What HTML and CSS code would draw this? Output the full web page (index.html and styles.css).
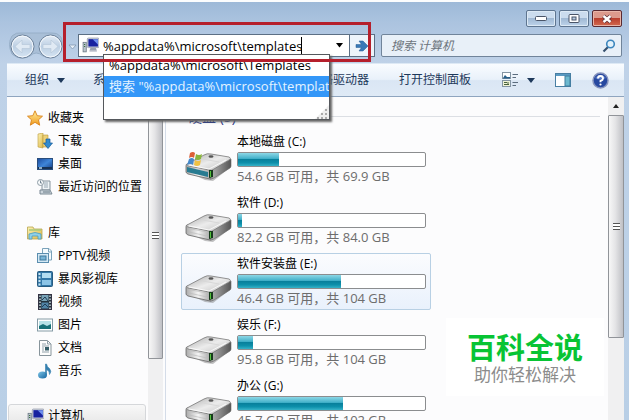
FILE: index.html
```html
<!DOCTYPE html>
<html lang="zh-CN">
<head>
<meta charset="utf-8">
<title>计算机</title>
<link rel="stylesheet" href="styles.css">
</head>
<body>
<svg class="defs" aria-hidden="true">
  <defs>
    <linearGradient id="metalTop" x1="0" y1="0" x2="1" y2="1"><stop offset="0" stop-color="#a9a9a9"/><stop offset=".5" stop-color="#ececec"/><stop offset="1" stop-color="#bdbdbd"/></linearGradient>
    <linearGradient id="metalSide" x1="0" y1="0" x2="1" y2="0"><stop offset="0" stop-color="#b8b8b8"/><stop offset="1" stop-color="#555"/></linearGradient>
    <linearGradient id="metalFront" x1="0" y1="0" x2="1" y2="0"><stop offset="0" stop-color="#aaa"/><stop offset=".45" stop-color="#f4f4f4"/><stop offset="1" stop-color="#999"/></linearGradient>
    <linearGradient id="blueGlass" x1="0" y1="0" x2="1" y2="1"><stop offset="0" stop-color="#1b4a9c"/><stop offset=".5" stop-color="#3f86d8"/><stop offset="1" stop-color="#123a80"/></linearGradient>
    <linearGradient id="folder" x1="0" y1="0" x2="1" y2="1"><stop offset="0" stop-color="#fdf3b5"/><stop offset="1" stop-color="#dcb646"/></linearGradient>
    <linearGradient id="star" x1="0" y1="0" x2="0" y2="1"><stop offset="0" stop-color="#fff0a0"/><stop offset="1" stop-color="#f09a1c"/></linearGradient>
    <linearGradient id="note" x1="0" y1="0" x2="1" y2="1"><stop offset="0" stop-color="#7cc4e6"/><stop offset="1" stop-color="#1464a0"/></linearGradient>
    <linearGradient id="orb" x1="0" y1="0" x2="0" y2="1"><stop offset="0" stop-color="#e6eef7"/><stop offset=".5" stop-color="#bccfe3"/><stop offset="1" stop-color="#d6e5f3"/></linearGradient>
    <symbol id="drive" viewBox="0 0 48 30">
      <path d="M3 20L20 28L28 29L46 15V12L27 22Z" fill="#777" opacity=".45"/>
      <path d="M2 12Q1 12 1 14V20Q1 21 3 22L25 27Q28 27 28 25V18Z" fill="url(#metalFront)" stroke="#666" stroke-width=".8"/>
      <path d="M28 17L46 7V14Q46 15 45 16L29 26Q27 27 25 27Z" fill="url(#metalSide)" stroke="#666" stroke-width=".6"/>
      <path d="M2 12L19 3Q22 1 26 2L44 5Q47 6 44 8L29 17Q27 19 24 18L3 14Q0 13 2 12Z" fill="url(#metalTop)" stroke="#777" stroke-width=".8"/>
      <path d="M4 13L24 17L41 8" fill="none" stroke="#fff" stroke-width=".8"/>
      <path d="M18 7L34 10" stroke="#d8d8d8" stroke-width="1"/>
      <ellipse cx="26" cy="4.500" rx="2.500" ry="1.200" fill="#555"/>
      <path d="M4 15.500V19L22 23V19Z" fill="none" stroke="#bbb" stroke-width=".7"/>
      <path d="M24 18H28V25L24 26Z" fill="#173c1c"/><path d="M25.500 19V25" stroke="#54c43c" stroke-width="1"/>
    </symbol>
    <symbol id="computer" viewBox="0 0 16 16">
      <rect x="5" y="1" width="11" height="9" rx="1" fill="#d8dce5" stroke="#8b92a5" stroke-width=".7"/>
      <rect x="6" y="2" width="9" height="7" fill="#1822a0"/><path d="M10 2H15V7Z" fill="#6f91ee"/>
      <path d="M8 10H13L14 13H7Z" fill="#9aa1b0"/><path d="M7 13H14V14H7Z" fill="#c8ccd6"/>
      <rect x="1" y="5" width="3" height="9" fill="#bac4cc" stroke="#667480" stroke-width=".7"/><path d="M2 7H3M2 9H3" stroke="#2a6630"/>
    </symbol>
  </defs>
</svg>
<div class="window">
  <header class="titlebar">
    <button class="caption" aria-label="最小化"><svg width="12" height="5" viewBox="0 0 12 5"><rect x=".5" y=".5" width="11" height="4" rx="1" fill="#fff" stroke="#4a5568"/></svg></button>
    <button class="caption" aria-label="最大化"><svg width="12" height="9" viewBox="0 0 12 9"><rect x="1" y=".5" width="10" height="8" rx="1" fill="#fff" stroke="#4a5568"/><rect x="4" y="3" width="4" height="3" fill="#b5cae0" stroke="#4a5568"/></svg></button>
    <button class="caption close" aria-label="关闭"><svg width="12" height="10" viewBox="0 0 12 10"><path d="M2.500 2L9.500 8M9.500 2L2.500 8" stroke="#5c3038" stroke-width="4"/><path d="M2.500 2L9.500 8M9.500 2L2.500 8" stroke="#fff" stroke-width="2.400"/></svg></button>
  </header>

  <nav class="navrow">
    <div class="travel">
      <svg class="travel-plate" width="56" height="28" viewBox="0 0 56 28" aria-hidden="true"><path d="M4 4Q8 0 14 1H43Q49 0 53 5Q56 13 51 21Q43 28 35 24Q28 18 22 24Q12 29 4 22Q-1 12 4 4Z" fill="#a9bfd7" stroke="#97afc8"/></svg>
      <button aria-label="后退"><svg width="25" height="25" viewBox="0 0 25 25"><circle cx="12.500" cy="12.500" r="11.500" fill="url(#orb)" stroke="#6b8099"/><circle cx="12.500" cy="12.500" r="10.400" fill="none" stroke="#f4f8fc"/><path d="M5 12.500L12 6V10.500H20V14.500H12V19Z" fill="#e0eaf4" stroke="#b8c9da" stroke-width=".7"/></svg></button>
      <button aria-label="前进"><svg width="25" height="25" viewBox="0 0 25 25"><circle cx="12.500" cy="12.500" r="11.500" fill="url(#orb)" stroke="#6b8099"/><circle cx="12.500" cy="12.500" r="10.400" fill="none" stroke="#f4f8fc"/><path d="M20 12.500L13 6V10.500H5V14.500H13V19Z" fill="#e0eaf4" stroke="#b8c9da" stroke-width=".7"/></svg></button>
      <button aria-label="最近的页面"><svg width="9" height="6" viewBox="0 0 9 6"><path d="M1 1H8L4.500 5Z" fill="#e8f0f8" stroke="#8298b0" stroke-width=".8"/></svg></button>
    </div>
    <div class="address">
      <svg width="17" height="17"><use href="#computer"/></svg>
      <input class="path" aria-label="地址" value="%appdata%\microsoft\templates">
      <span class="caret"></span>
      <button class="history" aria-label="以前的位置"><svg width="7" height="5" viewBox="0 0 7 5"><path d="M0 0H7L3.500 4.500Z" fill="#000"/></svg></button>
      <button class="go" aria-label="转到"><svg width="14" height="14" viewBox="0 0 14 14"><path d="M1 5.500H6.500L4 2H8L13 7L8 12H4L6.500 8.500H1Z" fill="#3979b7" stroke="#255b91" stroke-width=".5"/></svg></button>
      <div class="suggest" role="listbox">
        <div class="option" role="option">%appdata%\microsoft\Templates</div>
        <div class="option selected" role="option">搜索 "%appdata%\microsoft\templates"</div>
        <svg class="grip" width="14" height="14" viewBox="0 0 14 14"><path d="M0 14L14 0V14Z" fill="#eee"/><path d="M11 4v2M11 8v2M11 12v2M7 8v2M7 12v2M3 12v2" stroke="#aaa" stroke-width="2"/></svg>
      </div>
      <div class="marker"></div>
    </div>
    <div class="search">
      <input aria-label="搜索" placeholder="搜索 计算机">
      <svg width="14" height="14" viewBox="0 0 14 14"><path d="M6 8L1.500 12.500" stroke="#35506e" stroke-width="2.200"/><circle cx="8.500" cy="5" r="3.800" fill="#e3f2fb" stroke="#3c86bd" stroke-width="1.600"/></svg>
    </div>
  </nav>

  <div class="toolbar">
    <button class="organize">组织 <svg width="8" height="5" viewBox="0 0 8 5"><path d="M0 0H8L4 5Z" fill="#1e395b"/></svg></button>
    <button class="props">系统属性</button>
    <button class="map">映射网络驱动器</button>
    <button class="panel">打开控制面板</button>
    <div class="tools">
      <button class="views" aria-label="更改视图"><svg width="17" height="16" viewBox="0 0 17 16"><rect x=".5" y=".5" width="8" height="6" fill="#fff" stroke="#8495a3"/><path d="M1 6L3 3L5 5H8V6.500H1Z" fill="#285f89"/><rect x=".5" y="8.500" width="8" height="6" fill="#eef3d6" stroke="#8495a3"/><path d="M2 10.500H5M2 12.500H7M6 10V13" stroke="#49623c"/><path d="M10.500 2.500H16M10.500 5.500H14M10.500 10.500H16M10.500 13.500H14" stroke="#5b6c7e"/></svg><svg width="8" height="5" viewBox="0 0 8 5"><path d="M0 0H8L4 5Z" fill="#1e395b"/></svg></button>
      <button aria-label="预览窗格"><svg width="17" height="15" viewBox="0 0 17 15"><rect x=".5" y=".5" width="15" height="13" fill="#fff" stroke="#487fa3"/><path d="M1 2H15" stroke="#5a9ac2" stroke-width="2"/><rect x="10" y="3" width="5" height="10" fill="#6db9cf" stroke="#417e9f"/></svg></button>
      <button aria-label="帮助"><svg width="17" height="17" viewBox="0 0 17 17"><circle cx="8.500" cy="8.500" r="7.500" fill="#2648a0" stroke="#8593bd" stroke-width="1.500"/><path d="M3 6Q8 0 14 6Q8 9 3 6Z" fill="#6f91d8" opacity=".7"/><path d="M6 6.500Q6 4 8.500 4T11 6.500Q11 8 8.500 9V10.300" fill="none" stroke="#fff" stroke-width="1.900"/><circle cx="8.500" cy="12.500" r="1.100" fill="#fff"/></svg></button>
    </div>
  </div>

  <div class="content">
    <aside class="sidebar">
      <ul>
        <li><svg width="16" height="16" viewBox="0 0 16 16"><path d="M8 .8L10.200 5.700L15.500 6.200L11.500 9.800L12.700 15.200L8 12.300L3.300 15.200L4.500 9.800L.5 6.200L5.800 5.700Z" fill="url(#star)" stroke="#d98218" stroke-width=".9"/></svg>收藏夹</li>
        <li class="child"><svg width="16" height="16" viewBox="0 0 16 16"><path d="M1 1L6 0V15L1 14Z" fill="url(#folder)" stroke="#bb983b" stroke-width=".6"/><path d="M6 2H11V14H6Z" fill="#ecd077" stroke="#bb983b" stroke-width=".6"/><path d="M9 6H13V10H15.500L11 15.500L6.500 10H9Z" fill="#328bcf" stroke="#155a98" stroke-width=".7"/></svg>下载</li>
        <li class="child"><svg width="16" height="16" viewBox="0 0 16 16"><rect x=".5" y="2.500" width="15" height="11" fill="url(#blueGlass)" stroke="#294d7c"/><path d="M1 12H15" stroke="#173253" stroke-width="2"/><path d="M2 12H5" stroke="#b6d6e8" stroke-width="1.500"/></svg>桌面</li>
        <li class="child"><svg width="16" height="16" viewBox="0 0 16 16"><path d="M5 2H13V11H5Z" fill="#eef3f6" stroke="#85939d"/><path d="M7 4H11M7 6H11M7 8H11" stroke="#98a8b4"/><path d="M3 11H13L15 15H3Z" fill="#ccd5dc" stroke="#7a8994"/><path d="M6 13H13" stroke="#697a86"/><circle cx="3.500" cy="3.500" r="3" fill="#f5f8fa" stroke="#8f9da6"/><path d="M3.500 1.500V4H5" fill="none" stroke="#56697a" stroke-width=".8"/></svg>最近访问的位置</li>
        <li class="group"><svg width="16" height="16" viewBox="0 0 16 16"><path d="M.5 2H6L7 4H15V14H.5Z" fill="url(#folder)" stroke="#b9a44e" stroke-width=".8"/><path d="M2 5H14" stroke="#a9c878" stroke-width="1.500"/><path d="M2 14V9Q8 6 14 9V14H11V11H5V14Z" fill="#8fd0e8" stroke="#4d9cbc" stroke-width=".8"/></svg>库</li>
        <li class="child"><svg width="16" height="16" viewBox="0 0 16 16"><path d="M5.500 .5H12L14.500 3V12H5.500Z" fill="#f5fbfe" stroke="#7ba2ba"/><path d="M11.500 1V4H14" fill="none" stroke="#7ba2ba"/><rect x=".5" y="5.500" width="11" height="9" fill="#d4e9f5" stroke="#5b8eaf"/><rect x="3" y="8" width="6" height="4" fill="#78b4d5" stroke="#3c789d"/></svg>PPTV视频</li>
        <li class="child"><svg width="16" height="16" viewBox="0 0 16 16"><rect x=".5" y=".5" width="15" height="15" rx="1" fill="#3478a8" stroke="#275b80"/><path d="M2.500 2V15" stroke="#c9e5f3" stroke-width="2" stroke-dasharray="2 1.500"/><rect x="5" y="2" width="9" height="5" fill="#b4ddf1"/><rect x="5" y="9" width="9" height="5" fill="#8cc4e6"/></svg>暴风影视库</li>
        <li class="child"><svg width="16" height="16" viewBox="0 0 16 16"><rect x="1.500" y=".5" width="13" height="15" fill="#24323c" stroke="#334"/><path d="M3 1.500V15M13 1.500V15" stroke="#d8e2e8" stroke-width="1.400" stroke-dasharray="1.500 1.500"/><rect x="4.500" y="1" width="7" height="6" fill="#78a3b7"/><rect x="4.500" y="8.500" width="7" height="6" fill="#5084a7"/><path d="M5 6L8 3L11 7M5 13L8 10L11 13" stroke="#213c55" fill="none"/></svg>视频</li>
        <li class="child"><svg width="16" height="16" viewBox="0 0 16 16"><rect x=".5" y="2" width="15" height="12" fill="#fff" stroke="#859ba6"/><rect x="2" y="4" width="12" height="8" fill="#b9e3e8"/><path d="M2 9L6 7L10 9L14 7V12H2Z" fill="#197279"/></svg>图片</li>
        <li class="child"><svg width="16" height="16" viewBox="0 0 16 16"><path d="M2.500 .5H10.500L14 4V15.500H2.500Z" fill="#fdfdfd" stroke="#87949b"/><path d="M10.500 1V4H14M5 4H9M5 6H12M5 8H7M5 10H7M5 12H12" fill="none" stroke="#91a1aa"/><rect x="8" y="7" width="4" height="3.500" fill="#365f69"/></svg>文档</li>
        <li class="child"><svg width="16" height="16" viewBox="0 0 16 16"><ellipse cx="5.500" cy="12" rx="4.500" ry="3.500" fill="url(#note)"/><path d="M8.500 12V1H9.500Q10 4 12.500 5.500Q15 8.500 12.500 11.500Q13 8 9.500 6.500V12Z" fill="#347fae" stroke="#347fae" stroke-width=".6"/></svg>音乐</li>
        <li class="current"><svg width="17" height="17"><use href="#computer"/></svg>计算机</li>
      </ul>
    </aside>
    <div class="scroll side-scroll"><div class="thumb"><i></i></div></div>
    <main class="main">
      <h2>硬盘 (5)</h2>
      <div class="drives">
        <section class="drive"><svg width="48" height="30"><use href="#drive"/><path d="M2 15V20L23 25V20Z" fill="#287b91"/><path d="M5 1Q8-1 10 1L9 6Q7 4 4 6Z" fill="#dd6037"/><path d="M11 2Q14 4 17 2L16 7Q13 9 10 7Z" fill="#8ab63c"/><path d="M4 7Q7 5 9 7L8 13Q6 11 2 13Z" fill="#4689ca"/><path d="M10 8Q13 10 16 8L15 13Q12 15 9 13Z" fill="#efc144"/></svg><div class="info"><h3>本地磁盘 (C:)</h3><div class="bar"><div class="fill" style="width:22%"></div></div><p>54.6 GB 可用，共 69.9 GB</p></div></section>
        <section class="drive"><svg width="48" height="30"><use href="#drive"/></svg><div class="info"><h3>软件 (D:)</h3><div class="bar"><div class="fill" style="width:2%"></div></div><p>82.2 GB 可用，共 84.0 GB</p></div></section>
        <section class="drive hover"><svg width="48" height="30"><use href="#drive"/></svg><div class="info"><h3>软件安装盘 (E:)</h3><div class="bar"><div class="fill" style="width:55%"></div></div><p>46.4 GB 可用，共 104 GB</p></div></section>
        <section class="drive"><svg width="48" height="30"><use href="#drive"/></svg><div class="info"><h3>娱乐 (F:)</h3><div class="bar"><div class="fill" style="width:8%"></div></div><p>95.8 GB 可用，共 104 GB</p></div></section>
        <section class="drive"><svg width="48" height="30"><use href="#drive"/></svg><div class="info"><h3>办公 (G:)</h3><div class="bar"><div class="fill" style="width:56%"></div></div><p>45.7 GB 可用，共 102 GB</p></div></section>
      </div>
    </main>
    <div class="scroll main-scroll"><svg class="up" width="6" height="4" viewBox="0 0 6 4"><path d="M0 4L3 0L6 4Z" fill="#222"/></svg><div class="thumb"><i></i></div></div>
  </div>
</div>
<div class="brand"><strong>百科全说</strong><span>助你轻松解决</span></div>
</body>
</html>
```
FILE: styles.css
```css
* { box-sizing: border-box; }
body {
  margin: 0;
  height: 100vh;
  overflow: hidden;
  position: relative;
  font: 12px/16px "Open Sans", "Noto Sans CJK SC", sans-serif;
  color: #000;
}
button, input { font: inherit; color: inherit; margin: 0; padding: 0; border: 0; background: none; outline: 0; }
button { display: flex; align-items: center; justify-content: center; white-space: nowrap; }
svg { display: block; flex: none; }
.defs { position: absolute; width: 0; height: 0; }
h2, h3, p, ul { margin: 0; padding: 0; font-weight: normal; }
h3 { font-size: 12px; }

.window {
  height: 100%;
  display: flex;
  flex-direction: column;
  border-top: 2px solid #fbfdfe;
  padding: 0 5px 0 7px;
  background: linear-gradient(#9db9d8, #abc3df 20px, #bfd2e8 62px, #b9cfe6);
}
.titlebar { flex: none; height: 32px; padding: 8px 2px 0; display: flex; justify-content: flex-end; align-items: flex-start; gap: 3px; }
.caption { width: 30px; height: 17px; border: 1px solid #5e7590; border-radius: 2px; background: linear-gradient(#cbdcee 45%, #a0b9d4 50%, #bdd3ea); box-shadow: inset 0 0 0 1px #dce9f5; }
.close { border-color: #5a2a31; background: linear-gradient(#dc9a8c 45%, #b93f2d 50%, #d2694f); box-shadow: inset 0 0 0 1px #e8b5a8; }

.navrow { flex: none; height: 30px; display: flex; align-items: flex-start; padding-right: 2px; }
.travel { position: relative; width: 71px; height: 25px; display: flex; align-items: center; gap: 3px; padding-left: 3px; }
.travel button { position: relative; }
.travel button:last-child { margin-left: 2px; }
.travel-plate { position: absolute; left: 1px; top: -2px; }
.address { position: relative; flex: 0 0 297px; height: 23px; display: flex; align-items: center; border: 1px solid #5c6f84; background: #fff; padding-left: 3px; }
.path { width: 198px; height: 19px; margin-left: 4px; font-size: 13px; }
.caret { width: 1px; height: 17px; background: #000; }
.history { margin-left: auto; width: 20px; height: 21px; }
.go { width: 25px; height: 21px; border-left: 1px solid #5c6f84; background: #edf4fb; }
.suggest { position: absolute; z-index: 2; left: 24px; top: 19px; width: 227px; height: 66px; background: #fff; border: 1px solid #55585c; box-shadow: 2px 2px 2px #666; }
.option { height: 21px; line-height: 21px; padding-left: 5px; font-size: 13px; white-space: nowrap; overflow: hidden; }
.selected { background: #3397f8; color: #e4f3ff; }
.grip { position: absolute; right: 0; bottom: 0; }
.marker { position: absolute; z-index: 3; left: -16px; top: -13px; width: 308px; height: 40px; border: 3px solid #b51f2c; pointer-events: none; }
.search { flex: 1; margin-left: 6px; height: 23px; display: flex; align-items: center; border: 1px solid #70849a; border-radius: 2px; background: #e8f0f8; padding: 0 5px 0 9px; }
.search input { flex: 1; min-width: 0; font-style: italic; }
.search input::placeholder { color: #6c747c; opacity: 1; }

.toolbar { flex: none; height: 33px; display: flex; align-items: center; padding: 0 15px 0 18px; color: #1e395b; background: linear-gradient(#f9fcff, #e9f1fa 48%, #dae6f4 52%, #dfeaf6); border: solid #8fa5bf; border-width: 0 0 1px; box-shadow: 0 -1px #dde9f5; }
.organize { gap: 8px; }
.props { margin-left: 28px; }
.map { margin-left: 144px; }
.panel { margin-left: 30px; }
.tools { margin-left: auto; display: flex; align-items: center; gap: 20px; }
.views { gap: 8px; }

.content { flex: 1; min-height: 0; display: flex; background: #fcfcfd; overflow: hidden; }
.sidebar { flex: 0 0 141px; padding-top: 9px; overflow: hidden; }
.sidebar ul { list-style: none; }
.sidebar li { display: flex; align-items: center; gap: 5px; height: 23px; padding-left: 20px; white-space: nowrap; }
.sidebar .child { padding-left: 30px; }
.sidebar .group { margin-top: 23px; }
.sidebar .current { margin: 22px 2px 0 1px; padding-left: 18px; height: 24px; border: 1px solid #d5d7da; border-radius: 3px; background: linear-gradient(#f8f8f8, #e5e5e5); }
.sidebar .current { gap: 4px; }
.scroll { display: flex; flex-direction: column; align-items: center; background: #f0f0f1; }
.thumb { width: 100%; display: flex; align-items: center; justify-content: center; border: 1px solid #919499; border-radius: 1px; background: linear-gradient(90deg, #f7f7f7, #e4e4e6 45%, #bfc0c5); }
.thumb i { width: 7px; height: 7px; background: repeating-linear-gradient(#555 0 1px, #fff 1px 3px); }
.side-scroll { flex: 0 0 15px; padding-top: 16px; }
.side-scroll .thumb { height: 80%; }
.main { flex: 1; min-width: 0; margin-left: 2px; border-left: 1px solid #d4dce8; padding: 9px 8px 0 15px; }
.main h2 { display: flex; align-items: center; gap: 7px; margin-left: 7px; height: 21px; font-size: 14px; color: #1e3287; }
.main h2::after { content: ""; flex: 1; height: 1px; background: #dcdfe4; }
.drives { display: flex; flex-direction: column; gap: 4px; margin-top: 4px; }
.drive { flex: none; width: 250px; height: 57px; display: flex; border: 1px solid transparent; border-radius: 2px; padding: 2px 4px 0 3px; }
.drive > svg { margin-top: 18px; overflow: visible; }
.hover { border-color: #b8d0e4; background: linear-gradient(#fbfcfe, #e9f1fc); }
.info { flex: 1; margin-left: 4px; }
.info p { color: #6d6d6d; margin-top: 1px; font-size: 13px; }
.bar { height: 15px; margin-top: 2px; border: 1px solid #8b8d8f; border-radius: 2px; background: #fff; }
.fill { height: 100%; background: linear-gradient(#8dd7e6, #43b1ca 42%, #087f9b 48%, #0d8faa 75%, #35b2c8); }
.main-scroll { flex: 0 0 16px; }
.up { margin: 7px 0; }
.main-scroll .thumb { height: 69%; }

.brand { position: absolute; right: 25px; bottom: 24px; width: 158px; height: 78px; display: flex; flex-direction: column; align-items: center; justify-content: center; background: #fff; font-family: "Noto Sans CJK SC", sans-serif; }
.brand strong { font-size: 29px; line-height: 34px; font-weight: bold; color: #08c434; }
.brand span { font-size: 17px; line-height: 22px; color: #8c8c8c; }
```
